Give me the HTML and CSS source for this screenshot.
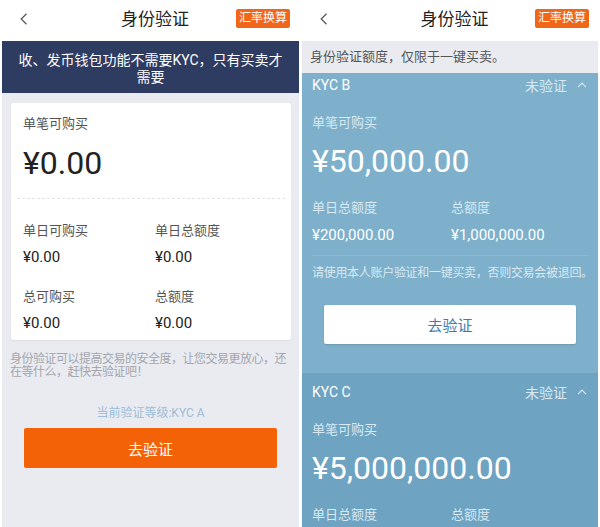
FILE: index.html
```html
<!DOCTYPE html>
<html lang="zh-CN">
<head>
    <meta charset="UTF-8">
    <meta name="viewport" content="width=device-width, initial-scale=1.0">
    <title>身份验证</title>
    <link rel="stylesheet" href="styles.css">
</head>
<body>
    <!-- Screen 1: current level -->
    <div class="screen screen-left">
        <header class="nav">
            <span class="nav-back">
                <svg width="8" height="12" viewBox="0 0 8 12"><polyline points="6.5,0.8 1.2,6 6.5,11.2" fill="none" stroke="#555" stroke-width="1.2"/></svg>
            </span>
            <h1 class="nav-title">身份验证</h1>
            <span class="nav-rate">汇率换算</span>
        </header>

        <div class="notice">收、发币钱包功能不需要KYC，只有买卖才需要</div>

        <div class="content">
            <div class="card">
                <div class="card-top">
                    <div class="card-label">单笔可购买</div>
                    <div class="card-amount">¥0.00</div>
                </div>
                <div class="card-cut"></div>
                <div class="card-bottom">
                    <div class="limit">
                        <div class="card-label">单日可购买</div>
                        <div class="limit-value">¥0.00</div>
                    </div>
                    <div class="limit">
                        <div class="card-label">单日总额度</div>
                        <div class="limit-value">¥0.00</div>
                    </div>
                    <div class="limit">
                        <div class="card-label">总可购买</div>
                        <div class="limit-value">¥0.00</div>
                    </div>
                    <div class="limit">
                        <div class="card-label">总额度</div>
                        <div class="limit-value">¥0.00</div>
                    </div>
                </div>
            </div>

            <p class="tip">身份验证可以提高交易的安全度，让您交易更放心，还在等什么，赶快去验证吧！</p>

            <div class="level">当前验证等级:KYC A</div>
            <button class="btn-verify">去验证</button>
        </div>
    </div>

    <!-- Screen 2: upgrade levels -->
    <div class="screen screen-right">
        <header class="nav">
            <span class="nav-back">
                <svg width="8" height="12" viewBox="0 0 8 12"><polyline points="6.5,0.8 1.2,6 6.5,11.2" fill="none" stroke="#555" stroke-width="1.2"/></svg>
            </span>
            <h1 class="nav-title">身份验证</h1>
            <span class="nav-rate">汇率换算</span>
        </header>

        <div class="info-bar">身份验证额度，仅限于一键买卖。</div>

        <div class="kyc-list">
            <section class="kyc kyc-b">
                <div class="kyc-head">
                    <span>KYC B</span>
                    <span class="kyc-status">未验证
                        <svg width="10" height="6" viewBox="0 0 10 6"><polyline points="1,5.2 5,1.2 9,5.2" fill="none" stroke="#d6e8f2" stroke-width="1.2"/></svg>
                    </span>
                </div>
                <div class="kyc-body">
                    <div class="kyc-label">单笔可购买</div>
                    <div class="kyc-amount">¥50,000.00</div>
                    <div class="kyc-limits">
                        <div>
                            <div class="kyc-label">单日总额度</div>
                            <div class="kyc-value">¥200,000.00</div>
                        </div>
                        <div>
                            <div class="kyc-label">总额度</div>
                            <div class="kyc-value">¥1,000,000.00</div>
                        </div>
                    </div>
                    <p class="kyc-tip">请使用本人账户验证和一键买卖，否则交易会被退回。</p>
                    <button class="btn-white">去验证</button>
                </div>
            </section>

            <section class="kyc kyc-c">
                <div class="kyc-head">
                    <span>KYC C</span>
                    <span class="kyc-status">未验证
                        <svg width="10" height="6" viewBox="0 0 10 6"><polyline points="1,5.2 5,1.2 9,5.2" fill="none" stroke="#d6e8f2" stroke-width="1.2"/></svg>
                    </span>
                </div>
                <div class="kyc-body">
                    <div class="kyc-label">单笔可购买</div>
                    <div class="kyc-amount">¥5,000,000.00</div>
                    <div class="kyc-limits">
                        <div>
                            <div class="kyc-label">单日总额度</div>
                            <div class="kyc-value">¥500,000.00</div>
                        </div>
                        <div>
                            <div class="kyc-label">总额度</div>
                            <div class="kyc-value">¥10,000,000.00</div>
                        </div>
                    </div>
                </div>
            </section>
        </div>
    </div>
</body>
</html>
```

FILE: styles.css
```css
* {
    margin: 0;
    padding: 0;
    box-sizing: border-box;
}

body {
    font-family: Roboto, "Noto Sans CJK SC", sans-serif;
    background: #fff;
    color: #333;
    display: flex;
    gap: 3px;
    padding: 0 2px;
    height: 527px;
    overflow: hidden;
}

.screen {
    height: 527px;
    overflow: hidden;
    background: #e9ebf1;
}

.screen-left {
    width: 297px;
}

.screen-right {
    width: 296px;
}

/* top bar */
.nav {
    height: 41px;
    background: #fff;
    display: grid;
    grid-template-columns: 1fr auto 1fr;
    align-items: center;
    padding: 0 9px 4px 18px;
}

.nav-back {
    display: flex;
    align-items: center;
}

.nav-title {
    font-size: 17px;
    font-weight: normal;
    color: #222;
    line-height: 22px;
    padding-top: 1px;
}

.nav-rate {
    justify-self: end;
    background: #f2661a;
    color: #fff;
    font-size: 12px;
    line-height: 19px;
    padding: 0 3px;
    border-radius: 2px;
    margin-top: -1px;
}

/* left screen */
.notice {
    background: #2e3c62;
    color: #fff;
    font-size: 14px;
    line-height: 17px;
    text-align: center;
    padding: 11px 12px 7px;
}

.content {
    padding: 10px 8px 0;
}

.card {
    margin-left: 1px;
    box-shadow: 0 1px 2px rgba(0, 0, 0, 0.05);
}

.card-top {
    background: #fff;
    border-radius: 3px 3px 0 0;
    padding: 12px 12px 13px;
}

.card-label {
    font-size: 13px;
    line-height: 18px;
    color: #555;
}

.card-amount {
    font-size: 32px;
    line-height: 40px;
    color: #222;
    margin-top: 10px;
}

.card-cut {
    height: 4px;
    background: #fff;
    position: relative;
    display: flex;
    align-items: center;
    padding: 0 6px;
}

.card-cut::before {
    content: "";
    flex: 1;
    border-top: 1px dashed #e2e4ea;
}

.card-cut::after {
    content: "";
    position: absolute;
    left: -3px;
    right: -3px;
    top: -1px;
    height: 6px;
    border-left: 3px solid #e9ebf1;
    border-right: 3px solid #e9ebf1;
    border-radius: 3px;
}

.card-bottom {
    background: #fff;
    border-radius: 0 0 3px 3px;
    padding: 22px 12px 6px;
    display: grid;
    grid-template-columns: 132px 1fr;
    row-gap: 20px;
}

.limit-value {
    font-size: 15px;
    line-height: 22px;
    color: #222;
    margin-top: 6px;
}

.tip {
    font-size: 12px;
    line-height: 13px;
    letter-spacing: -0.5px;
    color: #a3a6ad;
    margin: 13px -2px 0 0;
    line-break: anywhere;
}

.level {
    text-align: center;
    font-size: 12px;
    line-height: 16px;
    color: #9dbdd6;
    margin-top: 26px;
}

.btn-verify {
    display: block;
    width: calc(100% - 28px);
    margin: 7px 14px 0;
    height: 40px;
    border: none;
    border-radius: 2px;
    background: #f46207;
    color: #fff;
    font-family: inherit;
    font-size: 15px;
}

/* right screen */
.info-bar {
    position: relative;
    z-index: 1;
    height: 32px;
    line-height: 32px;
    padding-left: 8px;
    font-size: 13px;
    color: #555;
    background: #e9ebf1;
}

.kyc-list {
    margin-top: -7px;
}

.kyc {
    color: #fff;
}

.kyc-b {
    background: #7eb0cb;
}

.kyc-c {
    background: #6ea3c2;
}

.kyc-head {
    height: 38px;
    display: flex;
    align-items: center;
    justify-content: space-between;
    padding: 0 11px 0 10px;
    font-size: 14px;
}

.kyc-status {
    display: flex;
    align-items: center;
    gap: 10px;
    color: #d6e8f2;
}

.kyc-body {
    padding: 10px 10px 29px;
}

.kyc-label {
    font-size: 13px;
    line-height: 18px;
    color: #d8e9f2;
}

.kyc-amount {
    font-size: 32px;
    line-height: 40px;
    margin-top: 9px;
}

.kyc-limits {
    display: grid;
    grid-template-columns: 139px 1fr;
    margin-top: 18px;
    padding-bottom: 9px;
    border-bottom: 1px solid rgba(255, 255, 255, 0.12);
}

.kyc-value {
    font-size: 15px;
    line-height: 22px;
    margin-top: 7px;
}

.kyc-tip {
    font-size: 12px;
    line-height: 16px;
    letter-spacing: -0.3px;
    white-space: nowrap;
    color: #d8e9f2;
    margin-top: 9px;
}

.btn-white {
    display: block;
    width: calc(100% - 24px);
    margin: 24px 12px 0;
    height: 39px;
    border: none;
    border-radius: 2px;
    background: #fff;
    color: #3b7db0;
    font-family: inherit;
    font-size: 15px;
    box-shadow: 0 1px 2px rgba(0, 0, 0, 0.15);
}
```
